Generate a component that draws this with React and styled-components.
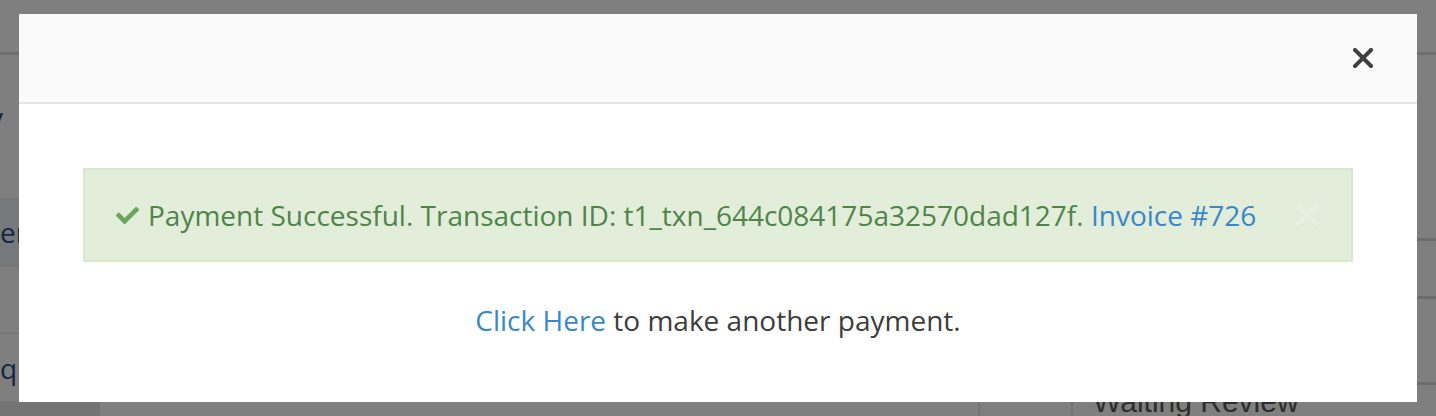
import React from 'react'
import styled, { createGlobalStyle } from 'styled-components'
import { FaCheck } from 'react-icons/fa'

const GlobalStyle = createGlobalStyle`
  html, body {
    margin: 0;
    padding: 0;
    height: 100%;
    background: #fff;
    overflow: hidden;
  }
  body {
    font-family: "Open Sans", "Liberation Sans", sans-serif;
  }
`

// page behind the backdrop
const Page = styled.div`
  width: 1436px;
  height: 416px;
  background: #fff;
  display: flex;
  flex-direction: column;
`
const TopBar = styled.div`
  height: 52px;
  border-bottom: 3px solid #dcdcdc;
  flex-shrink: 0;
`
const Body = styled.div`
  flex: 1;
  display: flex;
`
const Sidebar = styled.div`
  width: 100px;
  display: flex;
  flex-direction: column;
  background: #fff;
`
const NavItem = styled.div`
  height: ${p => p.h}px;
  display: flex;
  align-items: ${p => p.align || 'center'};
  border-bottom: ${p => (p.line ? '2px solid #ededed' : 'none')};
  background: ${p => (p.active ? '#ecf2f8' : 'transparent')};
  color: #2b4f82;
  font-size: 28px;
  line-height: 40px;
  white-space: nowrap;
  overflow: hidden;
  text-indent: ${p => p.indent || 0}px;
`
const SidebarFoot = styled.div`
  flex: 1;
  background: #e8e9eb;
`
const Main = styled.div`
  flex: 1;
  display: flex;
  justify-content: flex-end;
`
const TableCol = styled.div`
  width: ${p => p.w}px;
  border-left: 2px solid #e6e6e6;
  display: flex;
  flex-direction: column;
  justify-content: flex-end;
`
const Cell = styled.div`
  height: ${p => p.h}px;
  border-bottom: ${p => (p.line ? '3px solid #d8d8d8' : 'none')};
  box-sizing: border-box;
  padding-left: 20px;
  font-family: "Liberation Sans", Arial, sans-serif;
  font-size: 30px;
  line-height: 34px;
  color: #5a5a5a;
  white-space: nowrap;
`

const Backdrop = styled.div`
  position: fixed;
  inset: 0;
  background: rgba(0, 0, 0, 0.5);
`

const Modal = styled.div`
  position: fixed;
  top: 14px;
  left: 19px;
  width: 1398px;
  height: 388px;
  background: #fff;
  display: flex;
  flex-direction: column;
`
const ModalHeader = styled.div`
  height: 88px;
  background: #fafafa;
  border-bottom: 2px solid #e5e5e5;
  display: flex;
  align-items: center;
  justify-content: flex-end;
  padding-right: 44px;
`
const CloseButton = styled.button`
  border: 0;
  background: none;
  padding: 0;
  width: 20px;
  height: 20px;
  display: flex;
  cursor: pointer;
`
const ModalBody = styled.div`
  padding: 64px 64px 0;
  display: flex;
  flex-direction: column;
  align-items: stretch;
`
const Alert = styled.div`
  display: flex;
  align-items: center;
  height: 94px;
  box-sizing: border-box;
  padding: 0 33px 0 31px;
  background: #e2eeda;
  border: 2px solid #d8e8cb;
  color: #4f8549;
  font-size: 28px;
  line-height: 40px;
`
const CheckIcon = styled(FaCheck)`
  color: #69a55a;
  width: 23px;
  height: 23px;
  margin-right: 9px;
  flex-shrink: 0;
`
const AlertText = styled.div`
  flex: 1;
  white-space: nowrap;
`
const Link = styled.a`
  color: #3a87c9;
  text-decoration: none;
`
const AlertClose = styled.span`
  width: 22px;
  height: 22px;
  display: flex;
  opacity: 0.2;
`
const Note = styled.p`
  margin: 38px 0 0;
  text-align: center;
  font-size: 28px;
  line-height: 40px;
  color: #3d3d3d;
`

const Cross = ({ color, width }) => (
  <svg viewBox="0 0 20 20" width="100%" height="100%">
    <path
      d="M2 2 L18 18 M18 2 L2 18"
      stroke={color}
      strokeWidth={width}
      strokeLinecap="square"
    />
  </svg>
)

export default function App() {
  return (
    <>
      <GlobalStyle />
      <Page>
        <TopBar />
        <Body>
          <Sidebar>
            <NavItem h={143} indent={-11} align="flex-start">
              <span style={{ paddingTop: 42 }}>v</span>
            </NavItem>
            <NavItem h={67} active line>er</NavItem>
            <NavItem h={65} line />
            <NavItem h={67} line>qu</NavItem>
            <SidebarFoot />
          </Sidebar>
          <Main>
            <TableCol w={91} />
            <TableCol w={363}>
              <Cell h={186} line />
              <Cell h={58} line />
              <Cell h={86} line />
              <Cell h={31}>Waiting Review</Cell>
            </TableCol>
          </Main>
        </Body>
      </Page>
      <Backdrop />
      <Modal>
        <ModalHeader>
          <CloseButton aria-label="Close">
            <Cross color="#404040" width={4} />
          </CloseButton>
        </ModalHeader>
        <ModalBody>
          <Alert>
            <CheckIcon />
            <AlertText>
              Payment Successful. Transaction ID: t1_txn_644c084175a32570dad127f.{' '}
              <Link href="#">Invoice #726</Link>
            </AlertText>
            <AlertClose>
              <Cross color="#ffffff" width={4} />
            </AlertClose>
          </Alert>
          <Note>
            <Link href="#">Click Here</Link> to make another payment.
          </Note>
        </ModalBody>
      </Modal>
    </>
  )
}
